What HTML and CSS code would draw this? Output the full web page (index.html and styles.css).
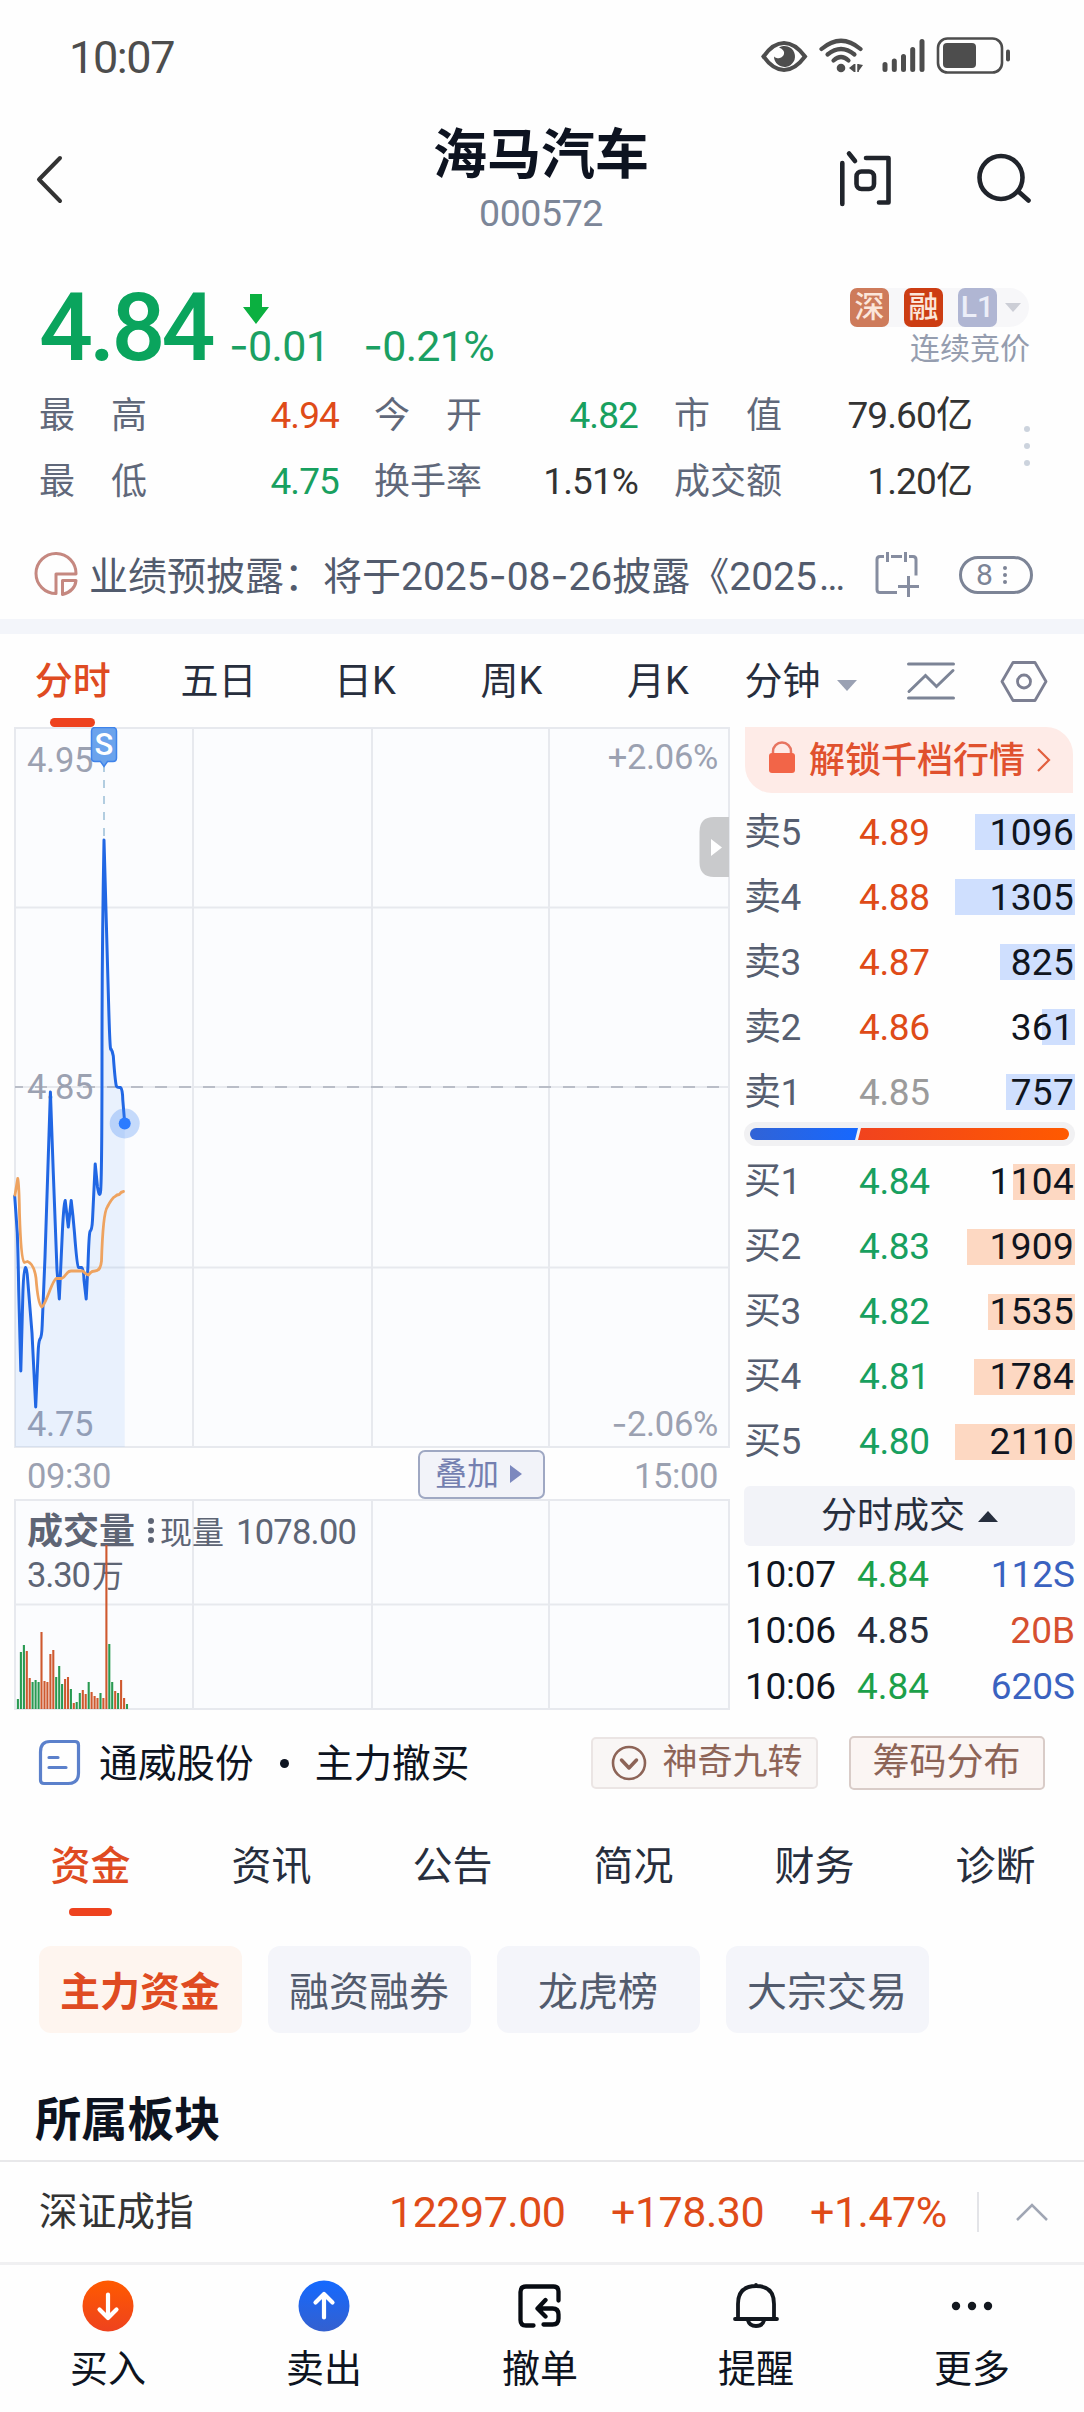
FILE: index.html
```html
<!DOCTYPE html>
<html lang="zh-CN">
<head>
<meta charset="utf-8">
<title>海马汽车 000572</title>
<link rel="stylesheet" href="styles.css">
</head>
<body>
<div class="app">
  <div class="status">
    <span class="clock">10:07</span>
    <svg class="status-icons" width="252" height="40" viewBox="760 36 252 40" fill="none" stroke="#4d4d4d">
      <path d="M763.500 56.500Q773 43 784 43T805 56.500Q795 70 784 70T763.500 56.500Z" stroke-width="4"/>
      <path d="M779 47.500A10.500 10.500 0 1 1 774 56.500A6 6 0 0 0 784 54Q785 50 779 47.500Z" fill="#4d4d4d" stroke="none"/>
      <g stroke-width="4.200" stroke-linecap="round"><path d="M821.500 49Q841 32.500 860.500 49"/><path d="M827.500 54.500Q841 43.500 854.500 54.500"/><path d="M833.500 60.500Q841 53.500 848.500 60.500"/></g>
      <circle cx="841" cy="68" r="4.300" fill="#4d4d4d" stroke="none"/>
      <path d="M849 68l5-4v8zM863 65l-5-1v8z" fill="#4d4d4d" stroke="none"/><path d="M854.700 64v8M858 64v8" stroke-width="1.500"/>
      <path d="M885 64.500v5M894.300 61v8.500M903.500 56.500v13M912.700 49.500v20M922 41.500v28" stroke-width="5" stroke-linecap="round"/>
      <rect x="938" y="38.500" width="64" height="34" rx="9.500" stroke-width="2.600"/>
      <rect x="943" y="43" width="33" height="25" rx="4" fill="#4d4d4d" stroke="none"/>
      <path d="M1008 51.500v8" stroke-width="4" stroke-linecap="round"/>
    </svg>
  </div>

  <header class="header">
    <svg class="back" width="36" height="56" viewBox="32 152 36 56" fill="none" stroke="#333" stroke-width="4" stroke-linecap="round" stroke-linejoin="round"><path d="M61 158L40 179.500L61 201"/></svg>
    <div class="heading"><h1>海马汽车</h1><span class="code">000572</span></div>
    <div class="actions">
      <svg width="56" height="60" viewBox="838 149 56 60" fill="none" stroke="#20242b" stroke-width="4.600" stroke-linecap="round" stroke-linejoin="round"><path d="M842.300 163v41M849 153.500l6 7.500M866 158h22.500v44.500h-9.500"/><rect x="856.500" y="171.500" width="17.500" height="17.500" rx="5"/></svg>
      <svg width="58" height="58" viewBox="974 150 58 58" fill="none" stroke="#20242b" stroke-width="4.600" stroke-linecap="round"><circle cx="1001" cy="178.500" r="21.500"/><path d="M1019 193l9.500 8.500"/></svg>
    </div>
  </header>

  <section class="quote">
    <span class="price">4.84</span>
    <div class="change">
      <svg width="28" height="34" viewBox="0 0 28 34"><path d="M8 1h12v13h7L14 31 1 14h7z" fill="#0bb040"/></svg>
      <div class="deltas"><span><em class="dash">-</em>0.01</span><span><em class="dash">-</em>0.21%</span></div>
    </div>
    <div class="market">
      <div class="badges"><b class="sz">深</b><b class="rong">融</b><b class="lv">L1</b><i class="caret"></i></div>
      <span class="phase">连续竞价</span>
    </div>
  </section>

  <section class="stats">
    <div class="grid">
      <span class="lab"><i>最</i><i>高</i></span><span class="up">4.94</span>
      <span class="lab"><i>今</i><i>开</i></span><span class="down">4.82</span>
      <span class="lab"><i>市</i><i>值</i></span><span>79.60亿</span>
      <span class="lab"><i>最</i><i>低</i></span><span class="down">4.75</span>
      <span class="lab"><i>换</i><i>手</i><i>率</i></span><span>1.51%</span>
      <span class="lab"><i>成</i><i>交</i><i>额</i></span><span>1.20亿</span>
    </div>
    <div class="dots"><i></i><i></i><i></i></div>
  </section>

  <section class="notice">
    <svg width="44" height="46" viewBox="34 552 44 46" fill="none" stroke="#c58880" stroke-width="3"><path d="M56 593.500A20 20 0 1 1 76 574H56z" stroke-linejoin="round"/><path d="M62.500 580.500H76Q75 591 62.500 594.500z" stroke-linejoin="round"/></svg>
    <span class="notice-text">业绩预披露：将于2025<em class="dash">-</em>08<em class="dash">-</em>26披露《2025<em class="more">…</em></span>
    <svg class="cal" width="46" height="48" viewBox="874 550 46 48" fill="none" stroke="#868da0" stroke-width="3"><path d="M884 555.500h-4q-3 0-3 3v30q0 3 3 3h17M891 555.500h11M909 555.500h4q3 0 3 3v16M887.500 551v10M905.500 551v10M898 585.500h21M908.500 575v21"/></svg>
    <div class="count"><span>8</span><i></i></div>
  </section>
  <div class="divider"></div>

  <nav class="periods">
    <span class="on">分时</span><span>五日</span><span>日K</span><span>周K</span><span>月K</span>
    <span class="minute">分钟<i class="caret"></i></span>
    <svg width="50" height="42" viewBox="906 659 50 42" fill="none" stroke="#7c8496" stroke-width="3" stroke-linecap="round"><path d="M908.500 663h45M908.500 697h45M909 690.500l16.500-16 11 11L953 669.500"/></svg>
    <svg width="50" height="44" viewBox="1000 658 50 44" fill="none" stroke="#7c7f92" stroke-width="2.800" stroke-linejoin="round"><path d="M1013 661.500h22l11 19-11 19h-22l-11-19z"/><circle cx="1024" cy="680.500" r="6.500"/></svg>
  </nav>

  <main class="board">
    <div class="charts">
      <svg class="plot" width="745" height="721" viewBox="0 727 745 721">
        <rect x="15" y="728" width="714" height="719" fill="#fbfcfe"/>
        <path class="gridline" d="M15 728H729V1447H15zM193 728V1447M372 728V1447M549 728V1447M15 907.500H729M15 1267.500H729M15 1087H729"/>
        <path d="M15 1087H729" stroke="#b9bdc7" stroke-width="2" stroke-dasharray="12 12" stroke-dashoffset="4"/>
        <g class="axis">
          <text x="27" y="772">4.95</text><text x="27" y="1099">4.85</text><text x="27" y="1436">4.75</text>
          <text x="718" y="769" text-anchor="end">+2.06%</text><text x="718" y="1436" text-anchor="end"><tspan class="dash">-</tspan>2.06%</text>
        </g>
        <path fill="#3b82f6" fill-opacity=".09" d="M15 1447V1196L17.500 1237 20.800 1371 23.400 1280 25.400 1267 32 1330 35.700 1407 39 1343 41.800 1335 45 1260 50.400 1092 53.300 1173 59.300 1299 62 1247 65.200 1200 68.300 1227 71.200 1200 77.700 1266 82.700 1268 86.200 1299 89.400 1233 92 1228 95.200 1164 99.700 1195 101.500 1180 102.500 1000 104 840 107.500 963 111 1048 112.700 1053 116.700 1087 121 1088 124.700 1123V1447z"/>
        <path fill="none" stroke="#2167e4" stroke-width="3" stroke-linejoin="round" stroke-linecap="round" d="M14.700 1196L17.300 1233Q18 1250 18.700 1290L20.800 1371 22.700 1300Q23.400 1268 25.400 1267.500 27 1268 27.700 1280L32 1333 35.700 1407 38 1355Q38.500 1341 40 1339 41.800 1337 42.200 1325L45 1257 50.400 1092 53.300 1173 57 1270 59.300 1299 62 1240Q63.500 1205 65.200 1200.500L68.300 1227 71.200 1200.500Q73 1215 74.500 1233 77 1266 78.500 1267.500H81.500Q83.500 1268 84 1280L86.200 1299 88 1265Q89 1234 90 1231.500 92 1230 92.500 1220L95.200 1164 97.500 1187Q99.700 1200 100.700 1190 102 1170 102 1050 102 950 104 840 107 945 108.500 1000T111 1049Q112.500 1051 113.300 1056 115 1080 116.300 1086 117.500 1088 120.500 1087.500 122.500 1089 122.800 1100L124.700 1123"/>
        <path fill="none" stroke="#eea360" stroke-width="2.800" stroke-linejoin="round" stroke-linecap="round" d="M15 1195L17.700 1178.500Q19 1183 19.500 1213 21 1260 24.300 1262.500L27.500 1261.500Q34 1264 36 1278 38 1304 41.700 1307 44 1306 50 1290 54 1280 56 1278.500H61.700C66 1277 66 1271 71 1271H82.700Q87 1275 88.500 1275 91 1271 95 1271 100.500 1271 101.500 1261 103 1213 107.300 1207 112 1198 115 1196.500 117 1194.500 119.300 1194.500 121 1191.700 123.500 1191.500"/>
        <circle cx="124.700" cy="1123.500" r="15" fill="#3b82f6" fill-opacity=".28"/><circle cx="124.700" cy="1123.500" r="6" fill="#2b7bff"/>
        <path d="M104 763V838" stroke="#b2cde0" stroke-width="2" stroke-dasharray="8 8" stroke-dashoffset="15"/>
        <path d="M95 727.500h18q3.500 0 3.500 3.500v27q0 3.500-3.500 3.500h-5.500l-3.500 5-3.500-5H95q-3.500 0-3.500-3.500v-27q0-3.500 3.500-3.500z" fill="#6ba3ec" stroke="#3f83ea" stroke-width="1.500"/>
        <text class="mark" x="104" y="755" text-anchor="middle">S</text>
        <path d="M729 817H714Q699.500 817 699.500 832V862Q699.500 877 714 877H729z" fill="#c9cacc"/><path d="M711 839v17l11-8.500z" fill="#fff"/>
      </svg>
      <div class="times"><span>09:30</span><button class="overlay">叠加<i></i></button><span>15:00</span></div>
      <svg class="plot" width="745" height="211" viewBox="0 1499 745 211">
        <rect x="15" y="1500" width="714" height="209" fill="#fbfcfe"/>
        <path class="gridline" d="M15 1500H729V1709H15zM193 1500V1709M372 1500V1709M549 1500V1709M15 1604.500H729"/>
        <g class="legend"><text class="name" x="27" y="1544">成交量</text><text x="160" y="1544" class="now">现量</text><text x="236" y="1544" textLength="121">1078.00</text><text x="27" y="1587" textLength="64">3.30</text><text x="92" y="1587" class="now">万</text></g>
        <g fill="#5e6575"><circle cx="151" cy="1521" r="3"/><circle cx="151" cy="1530.500" r="3"/><circle cx="151" cy="1540" r="3"/></g>
        <g fill="none" stroke-width="2.100">
          <path stroke="#299a52" d="M17.900 1709V1699M20.900 1709V1652M23.900 1709V1645M32.600 1709V1682M35.600 1709V1680M38.600 1709V1682M56.200 1709V1677M59.200 1709V1666M62.100 1709V1684M70.900 1709V1689M76.700 1709V1702M79.800 1709V1693M88.700 1709V1682M100.500 1709V1693M109.300 1709V1644M112.200 1709V1682M118.100 1709V1693M127 1709V1704"/>
          <path stroke="#cf592f" d="M26.800 1709V1651M29.700 1709V1678M41.500 1709V1632M44.500 1709V1681M47.400 1709V1682M50.400 1709V1654M53.300 1709V1650M65.100 1709V1679M68 1709V1677M73.800 1709V1703M82.800 1709V1690M85.700 1709V1694M91.600 1709V1692M94.600 1709V1696M97.500 1709V1698M103.400 1709V1698M106.400 1709V1545M115.200 1709V1691M121.100 1709V1680M124.100 1709V1698"/>
        </g>
      </svg>
    </div>

    <aside class="book">
      <div class="unlock">
        <svg width="28" height="34" viewBox="0 0 28 34"><path d="M5 13V10.500a9 9 0 0 1 18 0V13" fill="none" stroke="#e77561" stroke-width="2.500"/><rect x="1" y="12" width="26" height="20" rx="3" fill="#f26548"/></svg>
        <span>解锁千档行情</span>
        <svg width="14" height="26" viewBox="0 0 14 26" fill="none" stroke="#e2603f" stroke-width="2.200"><path d="M1 2l11 11L1 24"/></svg>
      </div>
      <div class="row sell"><span>卖5</span><span class="up">4.89</span><b><i style="width:100px"></i>1096</b></div>
      <div class="row sell"><span>卖4</span><span class="up">4.88</span><b><i style="width:120px"></i>1305</b></div>
      <div class="row sell"><span>卖3</span><span class="up">4.87</span><b><i style="width:75px"></i>825</b></div>
      <div class="row sell"><span>卖2</span><span class="up">4.86</span><b><i style="width:33px"></i>361</b></div>
      <div class="row sell"><span>卖1</span><span class="flat">4.85</span><b><i style="width:69px"></i>757</b></div>
      <div class="ratio"><i class="bid" style="width:108px"></i><i class="ask"></i></div>
      <div class="row buy"><span>买1</span><span class="down">4.84</span><b><i style="width:62px"></i>1104</b></div>
      <div class="row buy"><span>买2</span><span class="down">4.83</span><b><i style="width:108px"></i>1909</b></div>
      <div class="row buy"><span>买3</span><span class="down">4.82</span><b><i style="width:87px"></i>1535</b></div>
      <div class="row buy"><span>买4</span><span class="down">4.81</span><b><i style="width:101px"></i>1784</b></div>
      <div class="row buy"><span>买5</span><span class="down">4.80</span><b><i style="width:120px"></i>2110</b></div>
      <div class="deals-head">分时成交<i></i></div>
      <div class="deal"><span>10:07</span><span class="green">4.84</span><span class="blue">112S</span></div>
      <div class="deal"><span>10:06</span><span class="ink">4.85</span><span class="red">20B</span></div>
      <div class="deal"><span>10:06</span><span class="green">4.84</span><span class="blue">620S</span></div>
    </aside>
  </main>

  <section class="signal">
    <svg width="43" height="47" viewBox="38 1739 43 47" fill="none" stroke="#5b80cb" stroke-width="3.200" stroke-linecap="round"><path d="M50 1741.500h25q3.500 0 3.500 3.500v28q0 10.500-10.500 10.500H44q-3.500 0-3.500-3.500v-28q0-10.500 9.500-10.500zM49 1757.500h9M49 1767.500h17"/></svg>
    <span class="stock">通威股份</span><i class="bullet"></i><span class="stock">主力撤买</span>
    <div class="tag nine"><svg width="36" height="36" viewBox="0 0 36 36" fill="none" stroke="#8d6457" stroke-width="2.600"><circle cx="18" cy="18" r="16"/><path d="M10.500 15l7.500 8 7.500-8" stroke-width="3.500" stroke-linecap="round" stroke-linejoin="round"/></svg>神奇九转</div>
    <div class="tag chip-dist">筹码分布</div>
  </section>

  <nav class="sections"><span class="on">资金</span><span>资讯</span><span>公告</span><span>简况</span><span>财务</span><span>诊断</span></nav>
  <div class="pills"><span class="on">主力资金</span><span>融资融券</span><span>龙虎榜</span><span>大宗交易</span></div>
  <h2>所属板块</h2>

  <section class="index">
    <span class="iname">深证成指</span><span class="i1">12297.00</span><span class="i2">+178.30</span><span class="i3">+1.47%</span><i class="sep"></i>
    <svg width="34" height="20" viewBox="0 0 34 20" fill="none" stroke="#a0a6b4" stroke-width="2.500"><path d="M2 18L17 3l15 15"/></svg>
  </section>

  <nav class="bottom">
    <div><svg width="52" height="52" viewBox="0 0 52 52"><defs><linearGradient id="gb" x2="0" y2="1"><stop stop-color="#ff5a00"/><stop offset="1" stop-color="#ee421e"/></linearGradient></defs><circle cx="26" cy="26" r="25.500" fill="url(#gb)"/><path d="M26 14.500v23M17.500 29.500l8.500 8.500 8.500-8.500" fill="none" stroke="#fff" stroke-width="4.200" stroke-linecap="round" stroke-linejoin="round"/></svg>买入</div>
    <div><svg width="52" height="52" viewBox="0 0 52 52"><defs><linearGradient id="gs" x2="0" y2="1"><stop stop-color="#1469ff"/><stop offset="1" stop-color="#3460cf"/></linearGradient></defs><circle cx="26" cy="26" r="25.500" fill="url(#gs)"/><path d="M26 37.500v-23M17.500 22.500L26 14l8.500 8.500" fill="none" stroke="#fff" stroke-width="4.200" stroke-linecap="round" stroke-linejoin="round"/></svg>卖出</div>
    <div><svg width="52" height="52" viewBox="514 2281 52 52" fill="none" stroke="#070b12" stroke-width="4.300" stroke-linecap="round" stroke-linejoin="round"><path d="M558.500 2301.500v-9q0-5-5-5H526q-5.500 0-5.500 5.500v28q0 5.500 5.500 5.500h7.500M543.500 2325.500h9q6 0 6-6v-4q0-6-6-6H538.500M545.500 2301l-8 8.500 8 8"/></svg>撤单</div>
    <div><svg width="52" height="52" viewBox="729.500 2281 52 52" fill="none" stroke="#12171e" stroke-width="3.800" stroke-linecap="round" stroke-linejoin="round"><path d="M737.500 2319.500V2305Q737.500 2287 755.500 2287T773.500 2305V2319.500M734.500 2320h42M755.500 2286v1M747.500 2321.500q1.500 5.500 8 5.500t8-5.500"/></svg>提醒</div>
    <div><svg width="52" height="52" viewBox="0 0 52 52" fill="#12171e"><circle cx="10" cy="26" r="4.200"/><circle cx="26" cy="26" r="4.200"/><circle cx="42" cy="26" r="4.200"/></svg>更多</div>
  </nav>
</div>
</body>
</html>
```
FILE: styles.css
```css
* { box-sizing: border-box; }
body { margin: 0; background: #fefefe; font-family: Roboto, "Noto Sans CJK SC", sans-serif; color: #272e3d; }
i, em { font-style: normal; }
svg { display: block; flex: none; }
.app { width: 1084px; height: 2412px; overflow: hidden; display: flex; flex-direction: column; white-space: nowrap; }
.app > * { flex: none; }
.up { color: #df4b18 !important; }
.down { color: #18a05f !important; }
.flat { color: #9b9b9b !important; }
.caret { border: 8px solid transparent; border-top: 9px solid #ccced6; border-bottom: 0; }
.dash { font-family: Inter, sans-serif; }

.status { height: 110px; padding: 36px 72px 0 69px; display: flex; justify-content: space-between; align-items: flex-start; }
.clock { font-size: 45px; line-height: 44px; color: #4d4d4d; letter-spacing: -1.400px; }

.header { height: 140px; display: grid; grid-template-columns: 400px 282px 402px; }
.back { margin: 42px 0 0 31px; }
.heading { text-align: center; display: flex; flex-direction: column; align-items: center; }
h1 { margin: 15px 0 0; font-size: 54px; line-height: 62px; font-weight: 700; color: #0d1320; }
.code { font-size: 37.500px; line-height: 40px; margin-top: 6px; color: #7c8698; letter-spacing: -.4px; }
.actions { display: flex; gap: 80px; padding: 39px 0 0 156px; }

.quote { height: 132px; padding: 0 55px 0 39px; display: flex; }
.price { width: 190px; font-size: 95px; line-height: 90px; margin-top: 33px; font-weight: 500; color: #0aa45d; letter-spacing: -4px; }
.change { padding: 43px 0 0 0; }
.change svg { margin-left: 13px; }
.deltas { display: flex; gap: 34px; font-size: 43px; line-height: 44px; margin-top: -4px; color: #1ba062; letter-spacing: -.7px; }
.market { margin-left: auto; display: flex; flex-direction: column; align-items: flex-end; }
.badges { margin-top: 38px; width: 179px; height: 39px; border-radius: 7px 20px 20px 7px; background: #f7f7f9; display: flex; align-items: center; }
.badges b { width: 39px; height: 39px; margin-right: 15px; border-radius: 7px; color: #fbe6da; font-size: 30px; line-height: 38px; text-align: center; font-weight: 500; }
.badges .sz { background: #ce7b5b; }
.badges .rong { background: #cc3d13; margin-right: 15px; }
.badges .lv { background: #b0b6d3; color: #eceef8; margin-right: 8px; }
.phase { font-size: 30px; line-height: 34px; margin: 5px -1px 0 0; color: #959daf; }

.stats { height: 132px; display: flex; padding-left: 39px; }
.grid { display: grid; grid-template-columns: 108px 192px 35px 108px 156px 36px 108px 190px; grid-template-rows: 66px 66px; width: 933px; align-items: center; text-align: right; font-size: 37px; color: #333; letter-spacing: -.9px; }
.grid > :nth-child(6n+3) { grid-column: 4; }
.grid > :nth-child(6n+5) { grid-column: 7; }
.grid > * { line-height: 68px; height: 66px; }
.lab { display: flex; justify-content: space-between; font-size: 36px; color: #60687a; letter-spacing: 0; }
.dots { margin: 44px 0 0 52px; display: flex; flex-direction: column; gap: 11px; }
.dots i { width: 6px; height: 6px; border-radius: 50%; background: #ccd3dd; }

.notice { height: 105px; padding: 17px 51px 0 34px; display: flex; align-items: center; }
.notice-text { margin: 2px 0 0 11px; width: 785px; font-size: 39px; line-height: 50px; color: #525b6d; }
.notice-text .more { letter-spacing: 0; margin-left: 2px; }
.count { margin-left: 39px; width: 74px; height: 38px; border: 3px solid #7c8496; border-radius: 19px; display: flex; align-items: center; padding-left: 14px; color: #7c8496; font-size: 30px; line-height: 32px; gap: 10px; }
.count i { width: 4px; height: 4px; border-radius: 50%; background: #7c8496; box-shadow: 0 -7px #7c8496, 0 7px #7c8496; }
.divider { height: 15px; background: #f3f5fa; }

.periods { height: 93px; display: grid; grid-template-columns: 145.500px 146px 147px 146px 147px 174px 94px auto; align-items: center; font-size: 38px; color: #272e3d; }
.periods > span { text-align: center; line-height: 94px; height: 93px; }
.periods .on { color: #df4b22; display: flex; flex-direction: column; align-items: center; font-weight: 500; }
.periods .on::after { content: ""; width: 45px; height: 9px; border-radius: 5px; background: #ee421e; margin-top: -10px; flex: none; }
.periods .minute { text-align: left; padding-left: 13px; display: flex; align-items: center; gap: 16px; }
.minute .caret { border-width: 11px 10px 0; border-top-color: #9aa1b3; margin-top: 9px; }

.board { height: 983px; display: flex; }
.charts { width: 745px; }
.gridline { fill: none; stroke: #e7e9ee; stroke-width: 2; }
.axis text { font-size: 34.500px; fill: #9ba1b1; letter-spacing: -.3px; }
.mark { font-size: 31px; fill: #fff; font-weight: 500; }
.times { height: 51px; display: flex; align-items: center; padding: 4px 27px 0; font-size: 34.500px; color: #9ba1b1; letter-spacing: -.4px; }
.overlay { margin: -3px 89px 0 auto; width: 127px; height: 49px; border: 2px solid #9fa8c3; border-radius: 7px; background: #f2f3f9; font: 32px/44px Roboto, "Noto Sans CJK SC", sans-serif; color: #747fb0; display: flex; align-items: center; padding: 0 0 0 15px; gap: 11px; }
.overlay i { border: 9px solid transparent; border-left: 12px solid #7c88be; border-right: 0; }
.legend text { font-size: 34.500px; fill: #5e6575; }
.legend .now { font-size: 32px; }
.legend .name { font-size: 36px; font-weight: 700; }

.book { width: 330px; }
.unlock { width: 328px; height: 66px; border-radius: 0 27px 0 27px; background: #feebe7; display: flex; align-items: center; padding-left: 23px; font-size: 36px; color: #e0512e; font-weight: 500; }
.unlock span { margin: 2px 12px 0 13px; line-height: 62px; }
.unlock svg:first-child { margin-bottom: 5px; }
.row { height: 65px; display: grid; grid-template-columns: 114px 80px 1fr; align-items: center; font-size: 37px; color: #565e70; }
.unlock + .row { margin-top: 7px; }
.row > * { line-height: 64px; height: 65px; }
.row > span { letter-spacing: -.4px; }
.row > span:first-child { margin-left: -1px; }
.row.sell > * { line-height: 66px; }
.row > b { position: relative; z-index: 0; font-weight: 400; color: #101520; text-align: right; padding-right: 1px; letter-spacing: .3px; }
.row b i { position: absolute; z-index: -1; right: 0; top: 14px; height: 36px; background: #cfdffe; }
.buy b i { background: #fdd8c2; }
.ratio { height: 24px; margin: -3px 0 4px -1px; width: 331px; border-radius: 12px; background: #f1f1f3; padding: 6px; display: flex; }
.ratio i { height: 12px; }
.ratio .bid { border-radius: 6px 0 0 6px; background: linear-gradient(90deg, #3163d6, #1668ff); clip-path: polygon(0 0, 100% 0, calc(100% - 3px) 100%, 0 100%); }
.ratio .ask { flex: 1; border-radius: 0 6px 6px 0; background: linear-gradient(90deg, #f1431e, #ff5a00); clip-path: polygon(3px 0, 100% 0, 100% 100%, 0 100%); }
.deals-head { margin: 11px 0 1px -1px; width: 331px; height: 60px; border-radius: 6px; background: #f2f3f8; display: flex; align-items: center; justify-content: center; gap: 13px; font-size: 36px; color: #272e3d; line-height: 60px; }
.deals-head i { border: 10px solid transparent; border-bottom: 11px solid #272e3d; border-top: 0; }
.deal { height: 56px; line-height: 56px; display: grid; grid-template-columns: 112px 90px 1fr; font-size: 37px; color: #101520; }
.deal :last-child { text-align: right; }
.deal > :first-child { letter-spacing: -.3px; }
.green { color: #1ca049; } .blue { color: #3a62c0; } .red { color: #d65030; } .ink { color: #272e3d; }

.signal { height: 105px; padding-left: 38px; display: flex; align-items: center; font-size: 38.700px; color: #0d1320; }
.stock { margin: 2px 0 0 18px; line-height: 60px; }
.bullet { width: 9px; height: 9px; border-radius: 50%; background: #0d1320; margin: 2px 8px 0 26px; }
.tag { height: 54px; border: 2px solid #d9ccc8; border-radius: 5px; background: #fbf5f3; color: #8d6457; font-size: 37px; line-height: 50px; display: flex; align-items: center; }
.nine { margin-left: 121px; width: 227px; height: 52px; font-size: 35px; border-color: #ebe5e4; background: #f9f6f5; padding-left: 18px; gap: 16px; }
.chip-dist { margin-left: 31px; width: 196px; justify-content: center; }

.sections { height: 131px; display: grid; grid-template-columns: repeat(6, 181px); font-size: 40px; line-height: 103px; text-align: center; }
.sections .on { color: #df4b22; font-weight: 500; display: flex; flex-direction: column; align-items: center; }
.sections .on::after { content: ""; width: 43px; height: 8px; border-radius: 4px; background: #ee421e; margin-top: -10px; }
.pills { display: flex; gap: 26px; padding-left: 39px; height: 87px; }
.pills span { width: 203px; border-radius: 12px; background: #f4f5fa; color: #525b6d; font-size: 40px; line-height: 93px; text-align: center; text-indent: -1px; }
.pills .on { background: #fef5ef; color: #df4b22; font-weight: 700; }
h2 { margin: 0; height: 127px; padding: 57px 0 0 35px; font-size: 46.300px; line-height: 60px; font-weight: 700; color: #0d1320; }

.index { height: 102px; border-top: 2px solid #e8e8ea; display: flex; align-items: center; font-size: 43px; color: #df4b18; line-height: 98px; padding-right: 35px; }
.iname { margin-left: 39px; font-size: 38.700px; color: #333; width: 350px; }
.i1 { width: 222px; } .i2 { width: 199px; } .i3 { width: 167px; }
.i1, .i2, .i3 { letter-spacing: -.5px; }
.sep { width: 2px; height: 40px; background: #e3e4e8; }
.index svg { margin-left: auto; }

.bottom { flex: 1 !important; border-top: 3px solid #f0f0f2; display: grid; grid-template-columns: repeat(5, 216px); }
.bottom div { display: flex; flex-direction: column; align-items: center; padding-top: 15px; font-size: 38px; line-height: 50px; color: #0d1320; gap: 12px; }
```
